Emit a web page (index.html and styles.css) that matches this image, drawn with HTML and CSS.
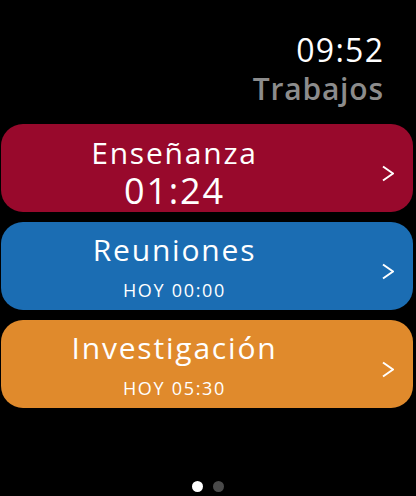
FILE: index.html
```html
<!DOCTYPE html>
<html lang="es">
<head>
    <meta charset="UTF-8">
    <meta name="viewport" content="width=device-width, initial-scale=1.0">
    <title>Trabajos</title>
    <link rel="stylesheet" href="styles.css">
</head>
<body>
    <div class="header">
        <div class="clock">09:52</div>
        <div class="title">Trabajos</div>
    </div>

    <div class="jobs">
        <div class="job job-red">
            <div class="job-text">
                <div class="job-name">Enseñanza</div>
                <div class="job-timer">01:24</div>
            </div>
            <svg class="chevron" viewBox="0 0 12 17"><polyline points="1,1.5 11,8.5 1,15.5"/></svg>
        </div>
        <div class="job job-blue">
            <div class="job-text">
                <div class="job-name">Reuniones</div>
                <div class="job-last">HOY 00:00</div>
            </div>
            <svg class="chevron" viewBox="0 0 12 17"><polyline points="1,1.5 11,8.5 1,15.5"/></svg>
        </div>
        <div class="job job-orange">
            <div class="job-text">
                <div class="job-name">Investigación</div>
                <div class="job-last">HOY 05:30</div>
            </div>
            <svg class="chevron" viewBox="0 0 12 17"><polyline points="1,1.5 11,8.5 1,15.5"/></svg>
        </div>
    </div>

    <div class="pager">
        <span class="dot active"></span>
        <span class="dot"></span>
    </div>
</body>
</html>
```

FILE: styles.css
```css
body {
    margin: 0;
    background: #000;
    color: #fff;
    font-family: "Open Sans", "Noto Sans", sans-serif;
    height: 496px;
    overflow: hidden;
}

.header {
    text-align: right;
    padding: 34px 33px 0 0;
}

.clock {
    font-size: 32px;
    line-height: 32px;
    letter-spacing: 1.3px;
    margin-right: -1.3px;
}

.title {
    font-size: 30px;
    line-height: 30px;
    font-weight: 600;
    color: #8c8c8c;
    letter-spacing: 0.8px;
    margin-top: 8px;
    margin-right: -0.8px;
}

.jobs {
    display: flex;
    flex-direction: column;
    gap: 10px;
    padding: 20px 3px 0 1px;
}

.job {
    height: 88px;
    border-radius: 22px;
    display: flex;
    align-items: center;
    padding-right: 19px;
}

.job-red { background: #98092c; }
.job-blue { background: #1b6db3; }
.job-orange { background: #e08a2c; }

.job-text {
    flex: 1;
    align-self: flex-start;
    text-align: center;
    padding: 13px 0 0 3px;
}

.job-name {
    font-size: 30px;
    line-height: 30px;
    letter-spacing: 1.8px;
}

.job-red .job-name {
    margin-top: 1px;
}

.job-timer {
    font-size: 36px;
    line-height: 36px;
    letter-spacing: 1.8px;
    margin-top: 5px;
}

.job-last {
    font-size: 18px;
    line-height: 20px;
    letter-spacing: 1.7px;
    margin-top: 15px;
}

.chevron {
    width: 12px;
    height: 17px;
    margin-left: 37px;
    margin-top: 10px;
    fill: none;
    stroke: #fff;
    stroke-width: 2;
}

.pager {
    display: flex;
    justify-content: center;
    gap: 10px;
    margin-top: 73px;
}

.dot {
    width: 11px;
    height: 11px;
    border-radius: 50%;
    background: #4a4a4a;
}

.dot.active {
    background: #fff;
}
```
